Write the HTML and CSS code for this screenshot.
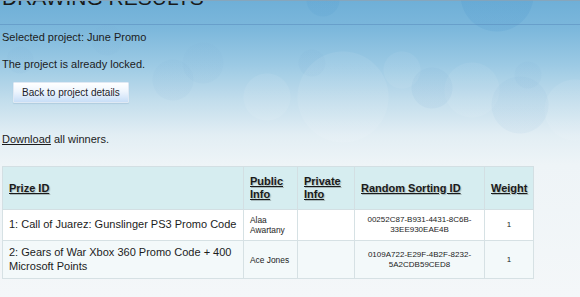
FILE: index.html
```
<!DOCTYPE html>
<html>
<head>
<meta charset="utf-8">
<link rel="stylesheet" href="styles.css">
</head>
<body>
<div class="page">
  <div class="header"><h1 class="title">DRAWING RESULTS</h1></div>
  <div class="content">
    <p class="line first">Selected project: June Promo</p>
    <p class="line second">The project is already locked.</p>
    <button class="btn" type="button">Back to project details</button>
    <p class="line download"><a class="link" href="#">Download</a> all winners.</p>
    <table class="results">
      <colgroup>
        <col class="c-prize">
        <col class="c-public">
        <col class="c-private">
        <col class="c-sort">
        <col class="c-weight">
      </colgroup>
      <thead>
        <tr>
          <th><a class="hlink" href="#">Prize ID</a></th>
          <th><a class="hlink" href="#">Public Info</a></th>
          <th><a class="hlink" href="#">Private Info</a></th>
          <th><a class="hlink" href="#">Random Sorting ID</a></th>
          <th><a class="hlink" href="#">Weight</a></th>
        </tr>
      </thead>
      <tbody>
        <tr class="odd">
          <td class="prize">1: Call of Juarez: Gunslinger PS3 Promo Code</td>
          <td class="small">Alaa Awartany</td>
          <td class="small"></td>
          <td class="tiny center">00252C87-B931-4431-8C6B-33EE930EAE4B</td>
          <td class="tiny center">1</td>
        </tr>
        <tr class="even">
          <td class="prize">2: Gears of War Xbox 360 Promo Code + 400 Microsoft Points</td>
          <td class="small">Ace Jones</td>
          <td class="small"></td>
          <td class="tiny center">0109A722-E29F-4B2F-8232-5A2CDB59CED8</td>
          <td class="tiny center">1</td>
        </tr>
      </tbody>
    </table>
  </div>
</div>
</body>
</html>
```
FILE: styles.css
```
html {
  margin: 0;
  min-height: 100%;
  background-color: #f3f6f8;
  background-image:
    radial-gradient(circle at 497px -5px, rgba(60,140,200,0.14) 36px, rgba(60,140,200,0) 37px),
    radial-gradient(circle at 323px 0px, rgba(60,140,200,0.10) 16px, rgba(60,140,200,0) 17px),
    radial-gradient(circle at 343px 97px, rgba(255,255,255,0.07) 45px, rgba(255,255,255,0) 46px),
    radial-gradient(circle at 432px 88px, rgba(120,170,210,0.10) 20px, rgba(120,170,210,0) 21px),
    radial-gradient(circle at 520px 105px, rgba(120,170,210,0.08) 28px, rgba(120,170,210,0) 29px),
    radial-gradient(circle at 528px 75px, rgba(120,170,210,0.08) 13px, rgba(120,170,210,0) 14px),
    radial-gradient(circle at 312px 63px, rgba(120,170,210,0.09) 13px, rgba(120,170,210,0) 14px),
    radial-gradient(circle at 402px 70px, rgba(255,255,255,0.06) 18px, rgba(255,255,255,0) 19px),
    radial-gradient(circle at 472px 90px, rgba(255,255,255,0.06) 27px, rgba(255,255,255,0) 28px),
    radial-gradient(circle at 20px 60px, rgba(120,170,210,0.08) 13px, rgba(120,170,210,0) 14px),
    radial-gradient(circle at 107px 40px, rgba(120,170,210,0.07) 15px, rgba(120,170,210,0) 16px),
    radial-gradient(circle at 173px 80px, rgba(120,170,210,0.07) 20px, rgba(120,170,210,0) 21px),
    radial-gradient(circle at 203px 63px, rgba(120,170,210,0.07) 20px, rgba(120,170,210,0) 21px),
    radial-gradient(circle at 267px 97px, rgba(255,255,255,0.07) 23px, rgba(255,255,255,0) 24px),
    radial-gradient(circle at 575px 110px, rgba(255,255,255,0.07) 30px, rgba(255,255,255,0) 31px),
    linear-gradient(to bottom, #6eafd7 0px, #7db8dc 30px, #9ccae4 65px, #c2ddec 100px, #e2eef4 135px, #eef4f7 165px, #f4f7f9 297px);
  background-repeat: no-repeat;
}

body {
  margin: 0;
  padding: 0;
  font-family: "Liberation Sans", Arial, sans-serif;
  color: #1c1c1c;
  border-top: 1px solid rgba(150,160,170,0.6);
}

.page {
  display: flex;
  flex-direction: column;
}

.header {
  margin-top: -14px;
  padding: 0 2px 16px;
  border-bottom: 1px solid rgba(85,135,185,0.5);
}

.title {
  margin: 0;
  font-size: 21px;
  line-height: 21px;
  font-weight: normal;
  color: #1a1a1a;
}

.content {
  padding: 0 2px;
  display: flex;
  flex-direction: column;
  align-items: flex-start;
}

.line {
  margin: 0;
  font-size: 11px;
  line-height: 13px;
}

.first {
  margin-top: 6px;
}

.second {
  margin-top: 14px;
}

.btn {
  margin-top: 11px;
  margin-left: 11px;
  height: 21px;
  padding: 0 8px;
  font-family: "Liberation Sans", Arial, sans-serif;
  font-size: 10px;
  color: #1c1c2a;
  border: 1px solid #dfe9f4;
  border-radius: 1px;
  background: linear-gradient(to bottom, #ffffff 0%, #eef5fd 45%, #c8def7 100%);
  box-shadow: 0 1px 1px rgba(60,100,150,0.15);
}

.download {
  margin-top: 30px;
}

.link {
  color: #1c1c1c;
  text-decoration: underline;
}

.results {
  margin-top: 20px;
  border-collapse: collapse;
  table-layout: fixed;
  width: 531px;
  border: 1px solid #d3dfe3;
}

.c-prize { width: 241px; }
.c-public { width: 54px; }
.c-private { width: 57px; }
.c-sort { width: 130px; }
.c-weight { width: 49px; }

.results th {
  background: #d6edf0;
  text-align: left;
  font-size: 11px;
  line-height: 13px;
  padding: 8px 6px;
  border: 1px solid #d3dfe3;
  vertical-align: middle;
}

.hlink {
  color: #1a1a1a;
  text-decoration: underline;
  text-shadow: 1px 1px 1px rgba(0,0,0,0.22);
}

.results td {
  padding: 5px 6px;
  border: 1px solid #d6e1e4;
  vertical-align: middle;
}

.odd td { background: #ffffff; }
.even td { background: #f3f9fa; }

.prize {
  font-size: 11px;
  line-height: 13.5px;
}

.small {
  font-size: 8.4px;
  line-height: 10px;
}

.tiny {
  font-size: 8px;
  line-height: 10px;
}

.center {
  text-align: center;
}
```
